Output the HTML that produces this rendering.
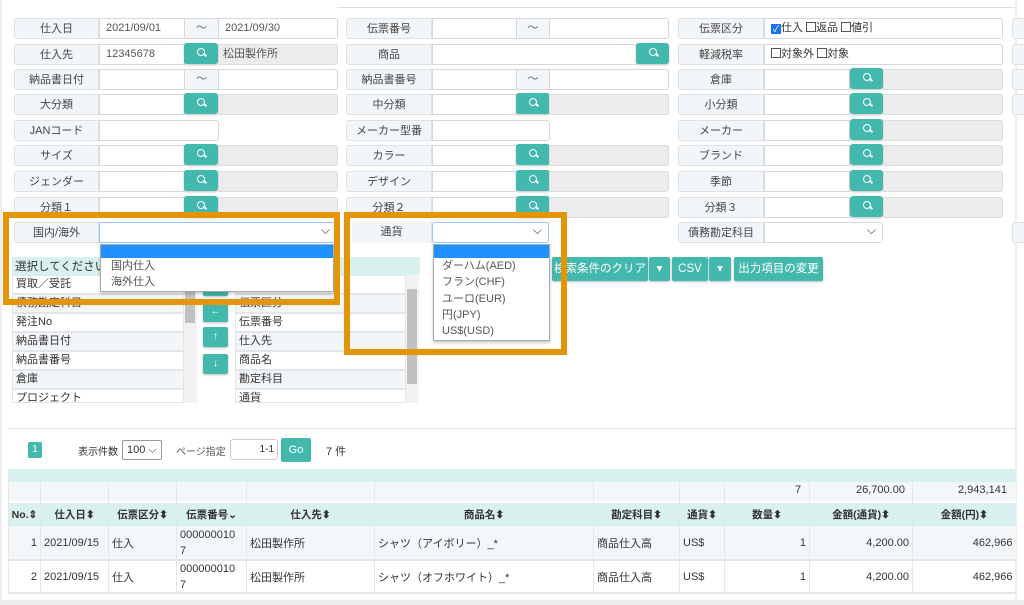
<!DOCTYPE html>
<html><head><meta charset="utf-8"><style>
*{box-sizing:border-box;margin:0;padding:0}
body{width:1024px;height:605px;background:#fff;font-family:"Liberation Sans","Noto Sans CJK JP",sans-serif;font-size:11px;color:#333;position:relative;overflow:hidden}
.a{position:absolute}
.l{position:absolute;height:21px;background:#f3f6f9;border:1px solid #dde2e6;border-radius:3px 0 0 3px;text-align:center;line-height:21px;font-size:11px;color:#444}
.i{position:absolute;height:21px;background:#fff;border:1px solid #d4d8dc;line-height:19px;padding-left:6px;color:#555}
.g{position:absolute;height:21px;background:#ececec;border:1px solid #dcdcdc;border-radius:0 3px 3px 0;line-height:19px;padding-left:4px;color:#555}
.t{position:absolute;height:21px;background:#f3f6f9;border:1px solid #d4d8dc;text-align:center;line-height:19px;color:#666}
.b{position:absolute;height:21px;background:#43b8ad;border-radius:3px;box-shadow:0 1px 2px rgba(0,0,0,.25)}
.b::after{content:"";position:absolute;left:13px;top:5px;width:6px;height:6px;border:1.5px solid #fff;border-radius:50%}
.b::before{content:"";position:absolute;left:19.5px;top:10px;width:1.5px;height:4px;background:#fff;transform:rotate(-45deg)}
.sel::after{content:"⌵";position:absolute;right:6px;top:-2px;font-size:12px;color:#333}
.o{position:absolute;border:6px solid #e39407}
.btn{position:absolute;height:24px;background:#43b8ad;color:#fff;line-height:24px;text-align:center;font-size:11.5px;border-radius:2px;box-shadow:0 1px 2px rgba(0,0,0,.25)}
.row{position:absolute;left:12px;width:172px;height:19px;border:1px solid #e2e6ea;padding-left:3px;line-height:17px;font-size:11px;color:#333}
.row2{position:absolute;left:235px;width:171px;height:19px;border:1px solid #e2e6ea;padding-left:3px;line-height:17px;font-size:11px;color:#333}
.ab{position:absolute;left:203px;width:25px;height:20px;background:#43b8ad;border-radius:2px;color:#fff;text-align:center;line-height:20px;font-size:10px;font-weight:bold;box-shadow:0 1px 2px rgba(0,0,0,.25)}
table{position:absolute;left:8px;border-collapse:collapse;font-size:11px}
td{border-left:1px solid #e3e8ea;padding:0 3px}
</style></head><body>
<div class="a" style="left:0;top:0;width:2px;height:605px;background:#eee"></div>
<div class="a" style="left:337px;top:7px;width:678px;height:1px;background:#ddd"></div>
<div class="a" style="left:1015px;top:0;width:2px;height:605px;background:#eee"></div>
<div class="a" style="left:0;top:600px;width:1024px;height:5px;background:#eee"></div>

<div class="l" style="left:14px;top:18px;width:85px">仕入日</div><div class="i" style="left:99px;top:18px;width:86px">2021/09/01</div><div class="t" style="left:184px;top:18px;width:35px">～</div><div class="i" style="left:218px;top:18px;width:120px;border-radius:0 3px 3px 0">2021/09/30</div>
<div class="l" style="left:14px;top:44px;width:85px">仕入先</div><div class="i" style="left:99px;top:44px;width:86px">12345678</div><div class="b" style="left:184px;top:43px;width:34px"></div><div class="g" style="left:218px;top:44px;width:120px">松田製作所</div>
<div class="l" style="left:14px;top:69px;width:85px">納品書日付</div><div class="i" style="left:99px;top:69px;width:86px"></div><div class="t" style="left:184px;top:69px;width:35px">～</div><div class="i" style="left:218px;top:69px;width:120px;border-radius:0 3px 3px 0"></div>
<div class="l" style="left:14px;top:94px;width:85px">大分類</div><div class="i" style="left:99px;top:94px;width:86px"></div><div class="b" style="left:184px;top:93px;width:34px"></div><div class="g" style="left:218px;top:94px;width:120px"></div>
<div class="l" style="left:14px;top:120px;width:85px">JANコード</div><div class="i" style="left:99px;top:120px;width:120px;border-radius:0 3px 3px 0"></div>
<div class="l" style="left:14px;top:145px;width:85px">サイズ</div><div class="i" style="left:99px;top:145px;width:86px"></div><div class="b" style="left:184px;top:144px;width:34px"></div><div class="g" style="left:218px;top:145px;width:120px"></div>
<div class="l" style="left:14px;top:171px;width:85px">ジェンダー</div><div class="i" style="left:99px;top:171px;width:86px"></div><div class="b" style="left:184px;top:170px;width:34px"></div><div class="g" style="left:218px;top:171px;width:120px"></div>
<div class="l" style="left:14px;top:197px;width:85px">分類１</div><div class="i" style="left:99px;top:197px;width:86px"></div><div class="b" style="left:184px;top:196px;width:34px"></div><div class="g" style="left:218px;top:197px;width:120px"></div>
<div class="l" style="left:14px;top:222px;width:85px">国内/海外</div><div class="i sel" style="left:99px;top:222px;width:238px;border-color:#9cc3ea"></div>

<div class="l" style="left:346px;top:18px;width:86px">伝票番号</div><div class="i" style="left:432px;top:18px;width:85px"></div><div class="t" style="left:516px;top:18px;width:34px">～</div><div class="i" style="left:549px;top:18px;width:120px;border-radius:0 3px 3px 0"></div>
<div class="l" style="left:346px;top:44px;width:86px">商品</div><div class="i" style="left:432px;top:44px;width:205px"></div><div class="b" style="left:636px;top:43px;width:33px"></div>
<div class="l" style="left:346px;top:69px;width:86px">納品書番号</div><div class="i" style="left:432px;top:69px;width:85px"></div><div class="t" style="left:516px;top:69px;width:34px">～</div><div class="i" style="left:549px;top:69px;width:120px;border-radius:0 3px 3px 0"></div>
<div class="l" style="left:346px;top:94px;width:86px">中分類</div><div class="i" style="left:432px;top:94px;width:85px"></div><div class="b" style="left:516px;top:93px;width:34px"></div><div class="g" style="left:549px;top:94px;width:120px"></div>
<div class="l" style="left:346px;top:120px;width:86px">メーカー型番</div><div class="i" style="left:432px;top:120px;width:118px;border-radius:0 3px 3px 0"></div>
<div class="l" style="left:346px;top:145px;width:86px">カラー</div><div class="i" style="left:432px;top:145px;width:85px"></div><div class="b" style="left:516px;top:144px;width:34px"></div><div class="g" style="left:549px;top:145px;width:120px"></div>
<div class="l" style="left:346px;top:171px;width:86px">デザイン</div><div class="i" style="left:432px;top:171px;width:85px"></div><div class="b" style="left:516px;top:170px;width:34px"></div><div class="g" style="left:549px;top:171px;width:120px"></div>
<div class="l" style="left:346px;top:197px;width:86px">分類２</div><div class="i" style="left:432px;top:197px;width:85px"></div><div class="b" style="left:516px;top:196px;width:34px"></div><div class="g" style="left:549px;top:197px;width:120px"></div>
<div class="l" style="left:352px;top:222px;width:80px;border:none;border-right:1px solid #dde2e6">通貨</div><div class="i sel" style="left:432px;top:222px;width:117px;border-color:#9cc3ea;border-radius:3px"></div>

<div class="l" style="left:678px;top:18px;width:86px">伝票区分</div><div class="i" style="left:764px;top:18px;width:239px;color:#333;font-size:11px;border-radius:0 3px 3px 0"><span style="display:inline-block;width:10px;height:10px;background:#1a73e8;vertical-align:-1px;color:#fff;font-size:9px;line-height:10px;text-align:center">✓</span>仕入 <span style="display:inline-block;width:10px;height:10px;border:1px solid #555;vertical-align:-1px"></span>返品 <span style="display:inline-block;width:10px;height:10px;border:1px solid #555;vertical-align:-1px"></span>値引</div>
<div class="l" style="left:678px;top:44px;width:86px">軽減税率</div><div class="i" style="left:764px;top:44px;width:239px;color:#333;border-radius:0 3px 3px 0"><span style="display:inline-block;width:10px;height:10px;border:1px solid #555;vertical-align:-1px"></span>対象外 <span style="display:inline-block;width:10px;height:10px;border:1px solid #555;vertical-align:-1px"></span>対象</div>
<div class="l" style="left:678px;top:69px;width:86px">倉庫</div><div class="i" style="left:764px;top:69px;width:86px"></div><div class="b" style="left:850px;top:68px;width:33px"></div><div class="g" style="left:883px;top:69px;width:120px"></div>
<div class="l" style="left:678px;top:94px;width:86px">小分類</div><div class="i" style="left:764px;top:94px;width:86px"></div><div class="b" style="left:850px;top:93px;width:33px"></div><div class="g" style="left:883px;top:94px;width:120px"></div>
<div class="l" style="left:678px;top:120px;width:86px">メーカー</div><div class="i" style="left:764px;top:120px;width:86px"></div><div class="b" style="left:850px;top:119px;width:33px"></div><div class="g" style="left:883px;top:120px;width:120px"></div>
<div class="l" style="left:678px;top:145px;width:86px">ブランド</div><div class="i" style="left:764px;top:145px;width:86px"></div><div class="b" style="left:850px;top:144px;width:33px"></div><div class="g" style="left:883px;top:145px;width:120px"></div>
<div class="l" style="left:678px;top:171px;width:86px">季節</div><div class="i" style="left:764px;top:171px;width:86px"></div><div class="b" style="left:850px;top:170px;width:33px"></div><div class="g" style="left:883px;top:171px;width:120px"></div>
<div class="l" style="left:678px;top:197px;width:86px">分類３</div><div class="i" style="left:764px;top:197px;width:86px"></div><div class="b" style="left:850px;top:196px;width:33px"></div><div class="g" style="left:883px;top:197px;width:120px"></div>
<div class="l" style="left:678px;top:222px;width:86px">債務勘定科目</div><div class="i sel" style="left:764px;top:222px;width:119px;border-radius:0 3px 3px 0"></div>
<div class="l" style="left:1012px;top:18px;width:20px"></div><div class="l" style="left:1012px;top:44px;width:20px"></div><div class="l" style="left:1012px;top:69px;width:20px"></div><div class="l" style="left:1012px;top:94px;width:20px"></div><div class="l" style="left:1012px;top:222px;width:20px"></div>

<div class="a" style="left:12px;top:257px;width:408px;height:18px;background:#d8f0ee"></div>
<div class="a" style="left:15px;top:258px;font-size:11.5px;color:#333">選択してください</div>
<div class="row" style="top:275px;background:#fff">買取／受託</div>
<div class="row" style="top:294px;background:#f3f6f9">債務勘定科目</div>
<div class="row" style="top:313px;background:#fff">発注No</div>
<div class="row" style="top:332px;background:#f3f6f9">納品書日付</div>
<div class="row" style="top:351px;background:#fff">納品書番号</div>
<div class="row" style="top:370px;background:#f3f6f9">倉庫</div>
<div class="row" style="top:389px;height:14px;background:#fff;overflow:hidden">プロジェクト</div>
<div class="a" style="left:184px;top:275px;width:13px;height:128px;background:#f2f2f2"></div>
<div class="a" style="left:185px;top:283px;width:10px;height:40px;background:#c1c1c1"></div>
<div class="ab" style="top:276px"></div>
<div class="ab" style="top:302px">←</div>
<div class="ab" style="top:327px">↑</div>
<div class="ab" style="top:354px">↓</div>
<div class="row2" style="top:275px;background:#fff"></div>
<div class="row2" style="top:294px;background:#f3f6f9">伝票区分</div>
<div class="row2" style="top:313px;background:#fff">伝票番号</div>
<div class="row2" style="top:332px;background:#f3f6f9">仕入先</div>
<div class="row2" style="top:351px;background:#fff">商品名</div>
<div class="row2" style="top:370px;background:#f3f6f9">勘定科目</div>
<div class="row2" style="top:389px;height:14px;background:#fff;overflow:hidden">通貨</div>
<div class="a" style="left:406px;top:275px;width:13px;height:128px;background:#f2f2f2"></div>
<div class="a" style="left:407px;top:289px;width:10px;height:95px;background:#c1c1c1"></div>

<div class="btn" style="left:552px;top:257px;width:96px">検索条件のクリア</div><div class="btn" style="left:649px;top:257px;width:21px">▾</div>
<div class="btn" style="left:672px;top:257px;width:36px">CSV</div><div class="btn" style="left:709px;top:257px;width:22px">▾</div>
<div class="btn" style="left:734px;top:257px;width:89px">出力項目の変更</div>

<div class="a" style="left:100px;top:244px;width:234px;height:48px;background:#fff;border:1px solid #aaa;box-shadow:0 2px 3px rgba(0,0,0,.2)"><div style="height:13px;background:#1e90ff"></div><div style="padding-left:10px;line-height:16px;color:#555">国内仕入<br>海外仕入</div></div>
<div class="a" style="left:433px;top:244px;width:117px;height:97px;background:#fff;border:1px solid #aaa;box-shadow:0 2px 3px rgba(0,0,0,.2)"><div style="height:13px;background:#1e90ff"></div><div style="padding-left:8px;line-height:16.3px;color:#555;font-size:11px">ダーハム(AED)<br>フラン(CHF)<br>ユーロ(EUR)<br>円(JPY)<br>US$(USD)</div></div>
<div class="o" style="left:3px;top:212px;width:337px;height:93px"></div>
<div class="o" style="left:344px;top:212px;width:223px;height:143px"></div>

<div class="a" style="left:8px;top:428px;width:1008px;height:1px;background:#e5e5e5"></div>
<div class="a" style="left:28px;top:442px;width:14px;height:16px;background:#43b8ad;color:#fff;text-align:center;line-height:16px;font-size:10px;border-radius:2px">1</div>
<div class="a" style="left:78px;top:443px;font-size:10px">表示件数</div>
<div class="a" style="left:122px;top:440px;width:40px;height:20px;border:1px solid #999;border-radius:2px;line-height:18px;padding-left:4px;font-size:11px">100 ⌵</div>
<div class="a" style="left:176px;top:443px;font-size:10px;color:#555">ページ指定</div>
<div class="a" style="left:230px;top:439px;width:48px;height:21px;border:1px solid #ccc;border-radius:3px;text-align:right;padding-right:3px;line-height:19px;font-size:10px">1-1</div>
<div class="a" style="left:281px;top:438px;width:30px;height:24px;background:#43b8ad;color:#fff;text-align:center;line-height:24px;font-size:11px;border-radius:2px">Go</div>
<div class="a" style="left:326px;top:443px;font-size:11px">7 件</div>

<div class="a" style="left:8px;top:469px;width:1008px;height:13px;background:#d8f0ee"></div>
<div class="a" style="left:8px;top:482px;width:1008px;height:19px;background:#f4f7f9"></div>
<div class="a" style="left:8px;top:503px;width:1008px;height:23px;background:#d8f0ee"></div>
<div class="a" style="left:8px;top:526px;width:1008px;height:33px;background:#f4f7f9"></div>
<div class="a" style="left:8px;top:559px;width:1008px;height:2px;background:#e3e8ea"></div>
<div class="a" style="left:8px;top:592px;width:1008px;height:2px;background:#e3e8ea"></div>
<div class="a" style="left:795px;top:484px;font-size:11px">7</div>
<div class="a" style="left:856px;top:484px;font-size:11px">26,700.00</div>
<div class="a" style="left:958px;top:484px;font-size:11px">2,943,141</div>
<table style="top:469px;height:125px">
<colgroup><col style="width:32px"><col style="width:68px"><col style="width:68px"><col style="width:70px"><col style="width:128px"><col style="width:219px"><col style="width:86px"><col style="width:45px"><col style="width:85px"><col style="width:103px"><col style="width:103px"></colgroup>
<tr style="height:13px"><td></td><td></td><td></td><td></td><td></td><td></td><td></td><td></td><td></td><td></td><td></td></tr>
<tr style="height:21px"><td></td><td></td><td></td><td></td><td></td><td></td><td></td><td></td><td></td><td></td><td></td></tr>
<tr style="height:23px;font-weight:600;text-align:center;font-size:10.5px"><td style="padding:0">No.⇕</td><td>仕入日⬍</td><td>伝票区分⬍</td><td>伝票番号⌄</td><td>仕入先⬍</td><td>商品名⬍</td><td>勘定科目⬍</td><td>通貨⬍</td><td>数量⬍</td><td>金額(通貨)⬍</td><td>金額(円)⬍</td></tr>
<tr style="height:34px"><td style="text-align:right">1</td><td>2021/09/15</td><td>仕入</td><td style="line-height:16px">000000010<br>7</td><td>松田製作所</td><td>シャツ（アイボリー）_*</td><td>商品仕入高</td><td>US$</td><td style="text-align:right">1</td><td style="text-align:right">4,200.00</td><td style="text-align:right">462,966</td></tr>
<tr style="height:34px"><td style="text-align:right">2</td><td>2021/09/15</td><td>仕入</td><td style="line-height:16px">000000010<br>7</td><td>松田製作所</td><td>シャツ（オフホワイト）_*</td><td>商品仕入高</td><td>US$</td><td style="text-align:right">1</td><td style="text-align:right">4,200.00</td><td style="text-align:right">462,966</td></tr>
</table>
</body></html>
